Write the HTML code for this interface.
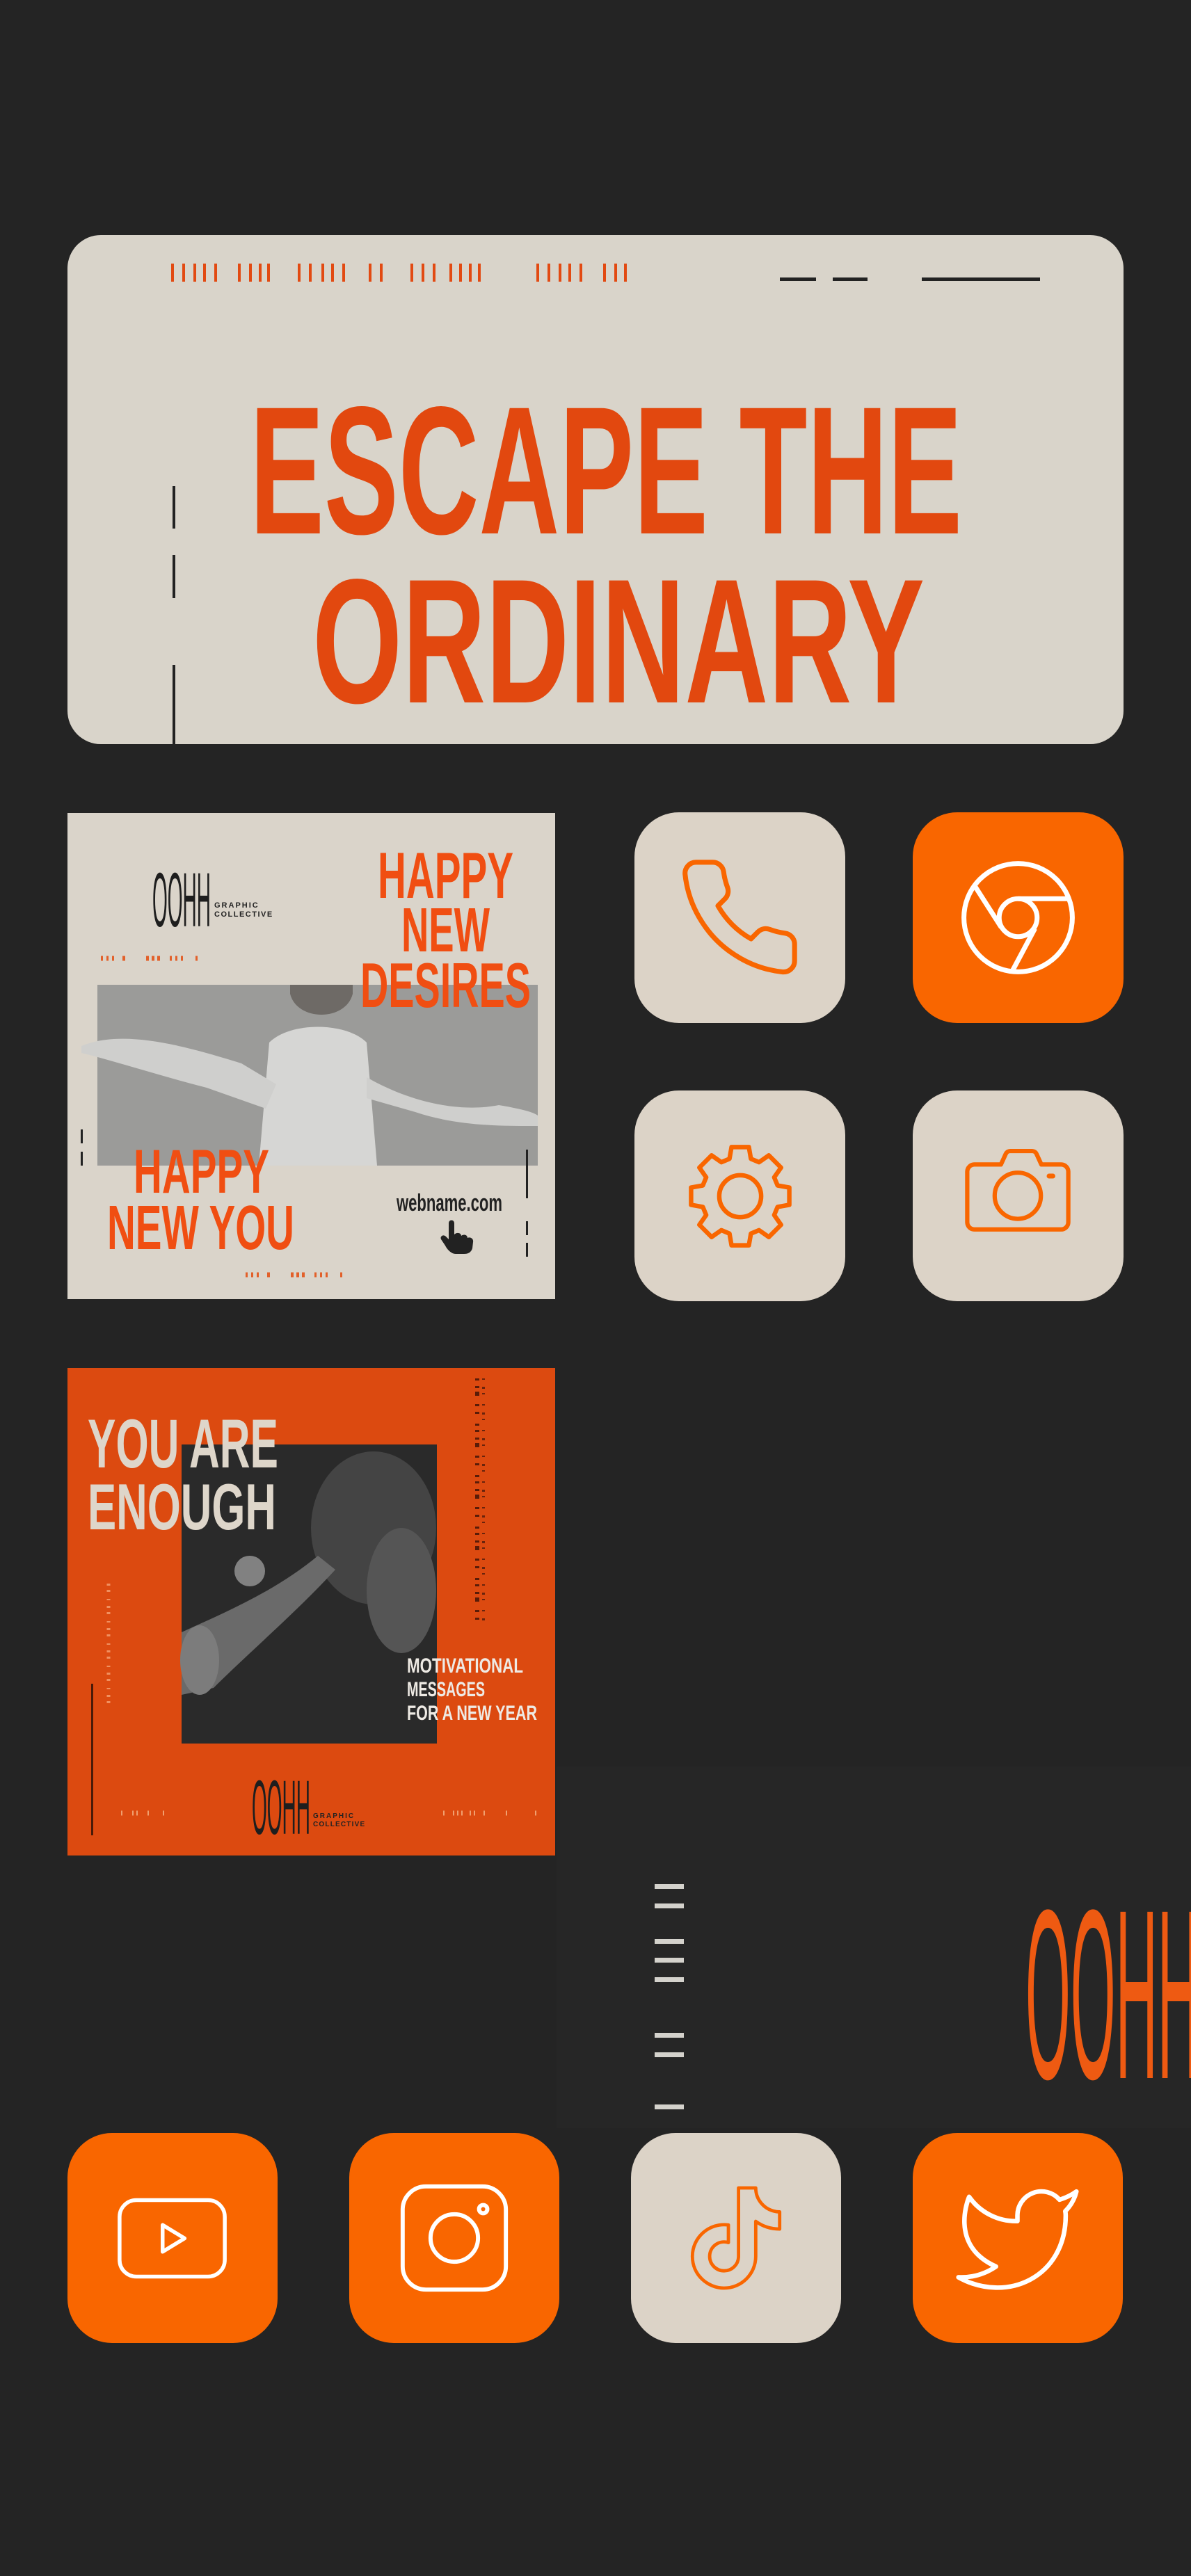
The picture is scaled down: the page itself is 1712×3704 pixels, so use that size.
<!DOCTYPE html>
<html><head><meta charset="utf-8"><style>
html,body{margin:0;padding:0;background:#242424;}
svg{display:block}
text{font-family:"Liberation Sans Narrow","Liberation Sans",sans-serif;}
</style></head><body>
<svg width="1712" height="3704" viewBox="0 0 1712 3704" xmlns="http://www.w3.org/2000/svg">
<rect width="1712" height="3704" fill="#242424"/>
<rect x="800" y="2540" width="912" height="520" fill="#262626"/>

<!-- Banner -->
<rect x="97" y="338" width="1518" height="732" rx="48" fill="#d9d4ca"/>
<line x1="246" y1="392" x2="902" y2="392" stroke="#e24a12" stroke-width="26" stroke-dasharray="4 12 4 12 4 10 4 12 4 30 4 12 4 10 4 8 4 40 4 12 4 14 4 10 4 12 4 34 4 12 4 40 4 12 4 12 4 20 4 10 4 10 4 9 4 80"/>
<rect x="1121" y="399" width="52" height="5" fill="#222"/>
<rect x="1197" y="399" width="50" height="5" fill="#222"/>
<rect x="1325" y="399" width="170" height="5" fill="#222"/>
<rect x="248" y="699" width="4" height="61" fill="#222"/>
<rect x="248" y="798" width="4" height="62" fill="#222"/>
<rect x="248" y="956" width="4" height="114" fill="#222"/>
<text x="359" y="767" font-size="262" font-weight="bold" fill="#e2480f" textLength="1024" lengthAdjust="spacingAndGlyphs">ESCAPE THE</text>
<text x="449" y="1010" font-size="255" font-weight="bold" fill="#e2480f" textLength="880" lengthAdjust="spacingAndGlyphs">ORDINARY</text>

<!-- Card 1 -->
<g transform="translate(97,1169)">
<rect width="701" height="699" fill="#dad4ca"/>
<rect x="43" y="247" width="633" height="260" fill="#9b9b99"/>
<path d="M290 330 C320 300 400 300 430 330 L445 507 L275 507 Z" fill="#d6d6d4"/>
<path d="M20 335 C80 310 170 335 250 360 L300 390 L285 425 L200 395 C140 380 80 360 20 345Z" fill="#cfcfcd"/>
<path d="M430 380 C500 420 570 430 620 420 C650 425 670 430 676 435 L676 450 C620 450 560 450 500 430 L430 410Z" fill="#cfcfcd"/>
<path d="M320 260 C330 300 400 300 410 260 L410 247 L320 247Z" fill="#6e6a66"/>
<line x1="48" y1="209" x2="217" y2="209" stroke="#e2602a" stroke-width="7" stroke-dasharray="3 5 3 5 3 12 4 30 4 4 4 4 4 14 3 5 3 5 3 18 3 40 3 10"/>
<line x1="256" y1="664" x2="412" y2="664" stroke="#e2602a" stroke-width="7" stroke-dasharray="3 5 3 5 3 12 4 30 4 4 4 4 4 14 3 5 3 5 3 18 3 40 3 10"/>
<rect x="19" y="455" width="3" height="20" fill="#222"/>
<rect x="19" y="487" width="3" height="20" fill="#222"/>
<rect x="659" y="484" width="3" height="70" fill="#222"/>
<rect x="659" y="587" width="3" height="20" fill="#222"/>
<rect x="659" y="618" width="3" height="20" fill="#222"/>
<text transform="translate(122,163) scale(1,2.2)" font-size="50" fill="#1e1e1e" textLength="84" lengthAdjust="spacingAndGlyphs">OOHH</text>
<text x="211" y="136" font-size="11" font-weight="bold" fill="#222" font-family="Liberation Sans" letter-spacing="2">GRAPHIC</text>
<text x="211" y="149" font-size="11" font-weight="bold" fill="#222" font-family="Liberation Sans" letter-spacing="1.5">COLLECTIVE</text>
<text x="446" y="122" font-size="94" font-weight="bold" fill="#f04e12" textLength="195" lengthAdjust="spacingAndGlyphs">HAPPY</text>
<text x="480" y="199" font-size="90" font-weight="bold" fill="#f04e12" textLength="127" lengthAdjust="spacingAndGlyphs">NEW</text>
<text x="421" y="279" font-size="91" font-weight="bold" fill="#f04e12" textLength="245" lengthAdjust="spacingAndGlyphs">DESIRES</text>
<text x="95" y="546" font-size="89" font-weight="bold" fill="#f04e12" textLength="195" lengthAdjust="spacingAndGlyphs">HAPPY</text>
<text x="57" y="627" font-size="90" font-weight="bold" fill="#f04e12" textLength="269" lengthAdjust="spacingAndGlyphs">NEW YOU</text>
<text x="473" y="572" font-size="34" font-weight="bold" fill="#222" textLength="152" lengthAdjust="spacingAndGlyphs">webname.com</text>
<path d="M548 590 C548 584 556 584 556 590 L556 606 C560 602 566 604 566 608 C570 605 575 607 575 611 C579 609 584 612 583 617 L582 626 C580 632 576 634 570 634 L558 634 C552 634 546 628 543 622 L537 613 C535 609 540 605 544 609 L548 613 Z" fill="#222"/>
</g>

<!-- Card 2 -->
<g transform="translate(97,1967)">
<rect width="701" height="701" fill="#dc4a10"/>
<rect x="164" y="110" width="367" height="430" fill="#2a2a2a"/>
<ellipse cx="440" cy="230" rx="90" ry="110" fill="#444"/>
<ellipse cx="480" cy="320" rx="50" ry="90" fill="#555"/>
<path d="M164 380 C230 350 300 320 360 270 L385 290 C330 350 260 410 210 460 L164 470Z" fill="#6a6a6a"/>
<ellipse cx="190" cy="420" rx="28" ry="50" fill="#7c7c7c"/>
<circle cx="262" cy="292" r="22" fill="#bdbdbd" opacity="0.6"/>
<text x="29" y="143" font-size="99" font-weight="bold" fill="#ded6ca" textLength="274" lengthAdjust="spacingAndGlyphs">YOU ARE</text>
<text x="29" y="232" font-size="94" font-weight="bold" fill="#ded6ca" textLength="271" lengthAdjust="spacingAndGlyphs">ENOUGH</text>
<text x="488" y="438" font-size="30" font-weight="bold" fill="#eeeae4" textLength="167" lengthAdjust="spacingAndGlyphs">MOTIVATIONAL</text>
<text x="488" y="472" font-size="30" font-weight="bold" fill="#eeeae4" textLength="112" lengthAdjust="spacingAndGlyphs">MESSAGES</text>
<text x="488" y="506" font-size="30" font-weight="bold" fill="#eeeae4" textLength="187" lengthAdjust="spacingAndGlyphs">FOR A NEW YEAR</text>
<line x1="589" y1="15" x2="589" y2="368" stroke="#5a1c08" stroke-width="6" stroke-dasharray="3 8 3 5 6 12 3 8 3 14 3 6"/>
<line x1="598" y1="15" x2="598" y2="368" stroke="#6a240c" stroke-width="4" stroke-dasharray="2 10 3 6 2 14"/>
<line x1="59" y1="310" x2="59" y2="482" stroke="#f09060" stroke-width="5" stroke-dasharray="3 6 3 10 2 8"/>
<rect x="34" y="454" width="3" height="218" fill="#4a1a08"/>
<line x1="77" y1="640" x2="150" y2="640" stroke="#f0a070" stroke-width="7" stroke-dasharray="2 14 2 4 2 14 2 20"/>
<line x1="540" y1="640" x2="675" y2="640" stroke="#f0a070" stroke-width="7" stroke-dasharray="2 12 2 4 2 4 2 10 2 4 2 12 2 30 2 40"/>
<text transform="translate(265,670) scale(1,2.2)" font-size="50" fill="#1e1e1e" textLength="84" lengthAdjust="spacingAndGlyphs">OOHH</text>
<text x="353" y="647" font-size="10" font-weight="bold" fill="#222" font-family="Liberation Sans" letter-spacing="2">GRAPHIC</text>
<text x="353" y="659" font-size="10" font-weight="bold" fill="#222" font-family="Liberation Sans" letter-spacing="1.2">COLLECTIVE</text>
</g>

<!-- Middle bars -->
<g fill="#d4d2cc">
<rect x="941" y="2709" width="42" height="7"/><rect x="941" y="2737" width="42" height="7"/>
<rect x="941" y="2788" width="42" height="7"/><rect x="941" y="2815" width="42" height="7"/><rect x="941" y="2843" width="42" height="7"/>
<rect x="941" y="2923" width="42" height="7"/><rect x="941" y="2951" width="42" height="7"/>
<rect x="941" y="3026" width="42" height="7"/>
</g>
<text transform="translate(1474,2988) scale(1,2.5)" font-size="139" fill="#ee5a12" textLength="250" lengthAdjust="spacingAndGlyphs">OOHH</text>

<!-- App tiles -->
<rect x="912" y="1168" width="303" height="303" rx="64" fill="#dcd3c7"/>
<rect x="1312" y="1168" width="303" height="303" rx="64" fill="#f96600"/>
<rect x="912" y="1568" width="303" height="303" rx="64" fill="#dcd3c7"/>
<rect x="1312" y="1568" width="303" height="303" rx="64" fill="#dcd3c7"/>

<svg x="968" y="1224" width="190" height="190" viewBox="0 0 24 24" fill="none" stroke="#f96600" stroke-width="0.9" stroke-linejoin="round" stroke-linecap="round">
<path d="M22 16.92v3a2 2 0 0 1-2.18 2 19.79 19.79 0 0 1-8.63-3.07 19.5 19.5 0 0 1-6-6 19.79 19.79 0 0 1-3.070-8.67A2 2 0 0 1 4.11 2h3a2 2 0 0 1 2 1.72 12.84 12.84 0 0 0 .7 2.81 2 2 0 0 1-.45 2.11L8.09 9.91a16 16 0 0 0 6 6l1.27-1.27a2 2 0 0 1 2.11-.45 12.84 12.84 0 0 0 2.81.7A2 2 0 0 1 22 16.92z"/>
</svg>
<svg x="1370" y="1226" width="187" height="187" viewBox="0 0 24 24" fill="none" stroke="#fff" stroke-width="0.9">
<circle cx="12" cy="12" r="10"/><circle cx="12" cy="12" r="3.5"/>
<line x1="21.17" y1="8.5" x2="12" y2="8.5"/><line x1="3.95" y1="6.06" x2="8.9" y2="13.8"/><line x1="10.88" y1="21.94" x2="15.1" y2="14"/>
</svg>
<svg x="978" y="1634" width="172" height="172" viewBox="0 0 24 24" fill="none" stroke="#f96600" stroke-width="0.9" stroke-linejoin="round">
<polygon points="9.85,4.50 10.26,2.15 13.74,2.15 14.15,4.50 15.78,5.18 17.74,3.81 20.19,6.26 18.82,8.22 19.50,9.85 21.85,10.26 21.85,13.74 19.50,14.15 18.82,15.78 20.19,17.74 17.74,20.19 15.78,18.82 14.15,19.50 13.74,21.85 10.26,21.85 9.85,19.50 8.22,18.82 6.26,20.19 3.81,17.74 5.18,15.78 4.50,14.15 2.15,13.74 2.15,10.26 4.50,9.85 5.18,8.22 3.81,6.26 6.26,3.81 8.22,5.18"/>
<circle cx="12" cy="12" r="4.2"/>
</svg>
<svg x="1380" y="1626" width="166" height="166" viewBox="0 0 24 24" fill="none" stroke="#f96600" stroke-width="0.9" stroke-linejoin="round" stroke-linecap="round">
<path d="M3 7h5.5l1-2.2a1 1 0 0 1 .9-.6h4.6a1 1 0 0 1 .9.6l1 2.2H21a1.5 1.5 0 0 1 1.5 1.5v10.5A1.5 1.5 0 0 1 21 20.5H3A1.5 1.5 0 0 1 1.5 19V8.5A1.5 1.5 0 0 1 3 7z"/>
<circle cx="12" cy="13.5" r="4.8"/>
<line x1="18.5" y1="9.4" x2="19.3" y2="9.4" stroke-width="1"/>
</svg>

<!-- Bottom dock -->
<rect x="97" y="3067" width="302" height="302" rx="64" fill="#f96600"/>
<rect x="502" y="3067" width="302" height="302" rx="64" fill="#f96600"/>
<rect x="907" y="3067" width="302" height="302" rx="64" fill="#dcd3c7"/>
<rect x="1312" y="3067" width="302" height="302" rx="64" fill="#f96600"/>

<svg x="165" y="3136" width="165" height="165" viewBox="0 0 24 24" fill="none" stroke="#fff" stroke-width="0.8" stroke-linejoin="round">
<rect x="1" y="4" width="22" height="16" rx="3.5"/>
<path d="M10 9.2v5.6l4.6-2.8z"/>
</svg>
<svg x="564" y="3129" width="178" height="178" viewBox="0 0 24 24" fill="none" stroke="#fff" stroke-width="0.8">
<rect x="2" y="2" width="20" height="20" rx="4.5"/>
<circle cx="12" cy="12" r="4.6"/>
<circle cx="17.6" cy="6.4" r="0.8"/>
</svg>
<svg x="962" y="3122" width="192" height="192" viewBox="0 0 24 24" fill="none" stroke="#f96600" stroke-width="0.6" stroke-linejoin="round">
<path d="M16.6 5.82A4.28 4.28 0 0 1 15.54 3h-3.09v12.4a2.59 2.59 0 0 1-2.59 2.5c-1.420 0-2.6-1.16-2.6-2.6 0-1.72 1.66-3.01 3.37-2.48V9.66c-3.45-.46-6.47 2.22-6.47 5.64 0 3.33 2.76 5.7 5.69 5.7 3.14 0 5.69-2.55 5.69-5.7V9.01a7.35 7.35 0 0 0 4.3 1.38V7.3s-1.88.09-3.24-1.48z"/>
</svg>
<svg x="1370" y="3128" width="185" height="185" viewBox="0 0 24 24" fill="none" stroke="#fff" stroke-width="0.85" stroke-linejoin="round">
<path d="M23 3a10.9 10.9 0 0 1-3.14 1.53 4.48 4.48 0 0 0-7.86 3v1A10.66 10.66 0 0 1 3 4s-4 9 5 13a11.64 11.64 0 0 1-7 2c9 5 20 0 20-11.5a4.5 4.5 0 0 0-.08-.83A7.72 7.72 0 0 0 23 3z"/>
</svg>
</svg>
</body></html>
